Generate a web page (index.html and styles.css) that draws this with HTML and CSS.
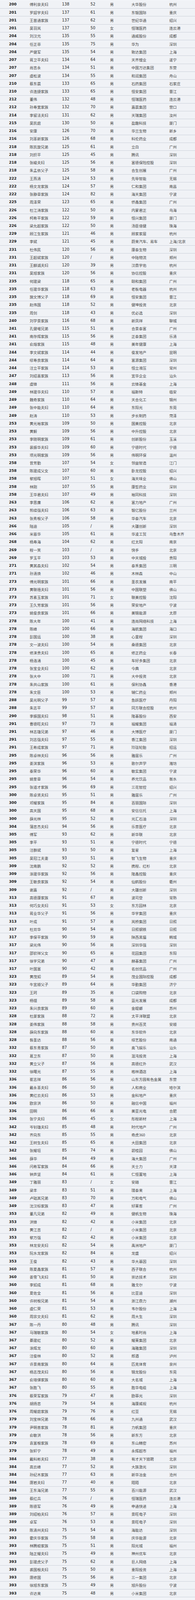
FILE: index.html
```html
<!DOCTYPE html>
<html lang="zh-CN">
<head>
<meta charset="utf-8">
<title>富豪榜 200-393</title>
<link rel="stylesheet" href="styles.css">
</head>
<body>
<div class="board">
<div class="row"><span class="rank">200</span><span class="name">傅利泉夫妇</span><span class="num">138</span><span class="age">52</span><span class="sex">男</span><span class="co">大华股份</span><span class="city">杭州</span></div>
<div class="row"><span class="rank">201</span><span class="name">罗韶宇夫妇</span><span class="num">137</span><span class="age">61</span><span class="sex">男</span><span class="co">东银国际</span><span class="city">重庆</span></div>
<div class="row"><span class="rank">201</span><span class="name">王苗通家族</span><span class="num">137</span><span class="age">62</span><span class="sex">男</span><span class="co">世纪华通</span><span class="city">绍兴</span></div>
<div class="row"><span class="rank">201</span><span class="name">吴羽岚</span><span class="num">137</span><span class="age">50</span><span class="sex">女</span><span class="co">恒瑞医药</span><span class="city">连云港</span></div>
<div class="row"><span class="rank">204</span><span class="name">刘汉元</span><span class="num">135</span><span class="age">55</span><span class="sex">男</span><span class="co">通威股份</span><span class="city">成都</span></div>
<div class="row"><span class="rank">204</span><span class="name">任正非</span><span class="num">135</span><span class="age">75</span><span class="sex">男</span><span class="co">华为</span><span class="city">深圳</span></div>
<div class="row"><span class="rank">204</span><span class="name">严健军</span><span class="num">135</span><span class="age">54</span><span class="sex">男</span><span class="co">致达集团</span><span class="city">上海</span></div>
<div class="row"><span class="rank">207</span><span class="name">蒋卫平夫妇</span><span class="num">134</span><span class="age">64</span><span class="sex">男</span><span class="co">天齐锂业</span><span class="city">遂宁</span></div>
<div class="row"><span class="rank">207</span><span class="name">尚吉永</span><span class="num">134</span><span class="age">51</span><span class="sex">男</span><span class="co">中国万达集团</span><span class="city">东营</span></div>
<div class="row"><span class="rank">207</span><span class="name">虞松波</span><span class="num">134</span><span class="age">55</span><span class="sex">男</span><span class="co">和润集团</span><span class="city">舟山</span></div>
<div class="row"><span class="rank">210</span><span class="name">蔡东晨</span><span class="num">133</span><span class="age">65</span><span class="sex">男</span><span class="co">石药集团</span><span class="city">石家庄</span></div>
<div class="row"><span class="rank">210</span><span class="name">许连捷家族</span><span class="num">133</span><span class="age">65</span><span class="sex">男</span><span class="co">恒安集团</span><span class="city">晋江</span></div>
<div class="row"><span class="rank">212</span><span class="name">董伟</span><span class="num">132</span><span class="age">48</span><span class="sex">男</span><span class="co">恒瑞医药</span><span class="city">连云港</span></div>
<div class="row"><span class="rank">212</span><span class="name">孙寿宽家族</span><span class="num">132</span><span class="age">70</span><span class="sex">男</span><span class="co">嘉晨集团</span><span class="city">营口</span></div>
<div class="row"><span class="rank">214</span><span class="name">李留法夫妇</span><span class="num">131</span><span class="age">62</span><span class="sex">男</span><span class="co">天瑞集团</span><span class="city">汝州</span></div>
<div class="row"><span class="rank">215</span><span class="name">吴凯庭</span><span class="num">130</span><span class="age">50</span><span class="sex">男</span><span class="co">盈趣科技</span><span class="city">厦门</span></div>
<div class="row"><span class="rank">216</span><span class="name">安康</span><span class="num">126</span><span class="age">70</span><span class="sex">男</span><span class="co">华兰生物</span><span class="city">新乡</span></div>
<div class="row"><span class="rank">216</span><span class="name">刘革新家族</span><span class="num">126</span><span class="age">68</span><span class="sex">男</span><span class="co">科伦药业</span><span class="city">成都</span></div>
<div class="row"><span class="rank">218</span><span class="name">陈凯旋兄弟</span><span class="num">125</span><span class="age">61</span><span class="sex">男</span><span class="co">立白</span><span class="city">广州</span></div>
<div class="row"><span class="rank">218</span><span class="name">刘炽平</span><span class="num">125</span><span class="age">45</span><span class="sex">男</span><span class="co">腾讯</span><span class="city">深圳</span></div>
<div class="row"><span class="rank">218</span><span class="name">张峻夫妇</span><span class="num">125</span><span class="age">56</span><span class="sex">男</span><span class="co">富德保险控股</span><span class="city">深圳</span></div>
<div class="row"><span class="rank">218</span><span class="name">朱孟依父子</span><span class="num">125</span><span class="age">58</span><span class="sex">男</span><span class="co">合生创展</span><span class="city">广州</span></div>
<div class="row"><span class="rank">222</span><span class="name">王燕清</span><span class="num">124</span><span class="age">53</span><span class="sex">男</span><span class="co">先导智能</span><span class="city">无锡</span></div>
<div class="row"><span class="rank">222</span><span class="name">杨文龙家族</span><span class="num">124</span><span class="age">57</span><span class="sex">男</span><span class="co">仁和集团</span><span class="city">南昌</span></div>
<div class="row"><span class="rank">222</span><span class="name">张静章家族</span><span class="num">124</span><span class="age">82</span><span class="sex">男</span><span class="co">海天集团</span><span class="city">宁波</span></div>
<div class="row"><span class="rank">225</span><span class="name">周泽荣</span><span class="num">123</span><span class="age">65</span><span class="sex">男</span><span class="co">侨鑫集团</span><span class="city">广州</span></div>
<div class="row"><span class="rank">226</span><span class="name">杜江涛家族</span><span class="num">122</span><span class="age">50</span><span class="sex">男</span><span class="co">内蒙君正</span><span class="city">乌海</span></div>
<div class="row"><span class="rank">226</span><span class="name">柯希平家族</span><span class="num">122</span><span class="age">59</span><span class="sex">男</span><span class="co">恒兴集团</span><span class="city">厦门</span></div>
<div class="row"><span class="rank">226</span><span class="name">梁允超家族</span><span class="num">122</span><span class="age">50</span><span class="sex">男</span><span class="co">汤臣倍健</span><span class="city">珠海</span></div>
<div class="row"><span class="rank">229</span><span class="name">顾江生家族</span><span class="num">121</span><span class="age">46</span><span class="sex">男</span><span class="co">顾家家居</span><span class="city">杭州</span></div>
<div class="row"><span class="rank">229</span><span class="name">李斌</span><span class="num">121</span><span class="age">45</span><span class="sex">男</span><span class="co">蔚来汽车、易车</span><span class="city">上海/北京</span></div>
<div class="row"><span class="rank">231</span><span class="name">杜伟民</span><span class="num">120</span><span class="age">56</span><span class="sex">男</span><span class="co">康泰生物</span><span class="city">深圳</span></div>
<div class="row"><span class="rank">231</span><span class="name">王超斌家族</span><span class="num">120</span><span class="age">/</span><span class="sex">男</span><span class="co">中陆物流</span><span class="city">郑州</span></div>
<div class="row"><span class="rank">231</span><span class="name">王麒诚夫妇</span><span class="num">120</span><span class="age">39</span><span class="sex">男</span><span class="co">汉鼎宇佑</span><span class="city">杭州</span></div>
<div class="row"><span class="rank">231</span><span class="name">吴旭家族</span><span class="num">120</span><span class="age">56</span><span class="sex">男</span><span class="co">协信控股</span><span class="city">重庆</span></div>
<div class="row"><span class="rank">235</span><span class="name">何建梁</span><span class="num">118</span><span class="age">65</span><span class="sex">男</span><span class="co">颐和集团</span><span class="city">广州</span></div>
<div class="row"><span class="rank">235</span><span class="name">任建华家族</span><span class="num">118</span><span class="age">63</span><span class="sex">男</span><span class="co">老板电器</span><span class="city">杭州</span></div>
<div class="row"><span class="rank">235</span><span class="name">施文博父子</span><span class="num">118</span><span class="age">69</span><span class="sex">男</span><span class="co">恒安集团</span><span class="city">晋江</span></div>
<div class="row"><span class="rank">235</span><span class="name">赵伟国</span><span class="num">118</span><span class="age">52</span><span class="sex">男</span><span class="co">健坤投资</span><span class="city">北京</span></div>
<div class="row"><span class="rank">235</span><span class="name">周剑</span><span class="num">118</span><span class="age">43</span><span class="sex">男</span><span class="co">优必选</span><span class="city">深圳</span></div>
<div class="row"><span class="rank">240</span><span class="name">刘学景家族</span><span class="num">116</span><span class="age">68</span><span class="sex">男</span><span class="co">新凤祥</span><span class="city">聊城</span></div>
<div class="row"><span class="rank">241</span><span class="name">孔健岷兄弟</span><span class="num">115</span><span class="age">51</span><span class="sex">男</span><span class="co">合景泰富</span><span class="city">广州</span></div>
<div class="row"><span class="rank">241</span><span class="name">南存辉家族</span><span class="num">115</span><span class="age">56</span><span class="sex">男</span><span class="co">正泰集团</span><span class="city">乐清</span></div>
<div class="row"><span class="rank">241</span><span class="name">俞熔家族</span><span class="num">115</span><span class="age">48</span><span class="sex">男</span><span class="co">美年健康</span><span class="city">上海</span></div>
<div class="row"><span class="rank">244</span><span class="name">李文斌家族</span><span class="num">114</span><span class="age">44</span><span class="sex">男</span><span class="co">俊发地产</span><span class="city">昆明</span></div>
<div class="row"><span class="rank">244</span><span class="name">缪寿良家族</span><span class="num">114</span><span class="age">64</span><span class="sex">男</span><span class="co">富源集团</span><span class="city">深圳</span></div>
<div class="row"><span class="rank">244</span><span class="name">汪立平家族</span><span class="num">114</span><span class="age">53</span><span class="sex">男</span><span class="co">恒立液压</span><span class="city">常州</span></div>
<div class="row"><span class="rank">247</span><span class="name">刘绍喜家族</span><span class="num">113</span><span class="age">56</span><span class="sex">男</span><span class="co">宜华企业</span><span class="city">汕头</span></div>
<div class="row"><span class="rank">248</span><span class="name">虞锋</span><span class="num">111</span><span class="age">56</span><span class="sex">男</span><span class="co">云锋基金</span><span class="city">上海</span></div>
<div class="row"><span class="rank">249</span><span class="name">林建华夫妇</span><span class="num">110</span><span class="age">57</span><span class="sex">男</span><span class="co">福斯特</span><span class="city">临安</span></div>
<div class="row"><span class="rank">249</span><span class="name">魏奇家族</span><span class="num">110</span><span class="age">64</span><span class="sex">男</span><span class="co">天合化工</span><span class="city">锦州</span></div>
<div class="row"><span class="rank">249</span><span class="name">张中能夫妇</span><span class="num">110</span><span class="age">64</span><span class="sex">男</span><span class="co">东阳光</span><span class="city">东莞</span></div>
<div class="row"><span class="rank">249</span><span class="name">赵涛</span><span class="num">110</span><span class="age">53</span><span class="sex">男</span><span class="co">步长制药</span><span class="city">菏泽</span></div>
<div class="row"><span class="rank">253</span><span class="name">黄光裕家族</span><span class="num">109</span><span class="age">50</span><span class="sex">男</span><span class="co">国美控股</span><span class="city">北京</span></div>
<div class="row"><span class="rank">253</span><span class="name">黄毅</span><span class="num">109</span><span class="age">56</span><span class="sex">男</span><span class="co">中升控股</span><span class="city">北京</span></div>
<div class="row"><span class="rank">253</span><span class="name">李晓明家族</span><span class="num">109</span><span class="age">61</span><span class="sex">男</span><span class="co">创新股份</span><span class="city">玉溪</span></div>
<div class="row"><span class="rank">253</span><span class="name">裴振华夫妇</span><span class="num">109</span><span class="age">60</span><span class="sex">男</span><span class="co">宁德时代</span><span class="city">宁德</span></div>
<div class="row"><span class="rank">253</span><span class="name">项光明家族</span><span class="num">109</span><span class="age">56</span><span class="sex">男</span><span class="co">伟明环保</span><span class="city">温州</span></div>
<div class="row"><span class="rank">258</span><span class="name">曾芳勤</span><span class="num">107</span><span class="age">54</span><span class="sex">女</span><span class="co">领益智造</span><span class="city">江门</span></div>
<div class="row"><span class="rank">258</span><span class="name">陈建成父女</span><span class="num">107</span><span class="age">60</span><span class="sex">男</span><span class="co">卧龙控股</span><span class="city">绍兴</span></div>
<div class="row"><span class="rank">258</span><span class="name">黎旭晖</span><span class="num">107</span><span class="age">51</span><span class="sex">女</span><span class="co">海天味业</span><span class="city">佛山</span></div>
<div class="row"><span class="rank">258</span><span class="name">林刚</span><span class="num">107</span><span class="age">55</span><span class="sex">男</span><span class="co">康哲药业</span><span class="city">深圳</span></div>
<div class="row"><span class="rank">258</span><span class="name">王华君夫妇</span><span class="num">107</span><span class="age">49</span><span class="sex">男</span><span class="co">裕同科技</span><span class="city">深圳</span></div>
<div class="row"><span class="rank">263</span><span class="name">李思廉</span><span class="num">106</span><span class="age">62</span><span class="sex">男</span><span class="co">富力地产</span><span class="city">广州</span></div>
<div class="row"><span class="rank">263</span><span class="name">熊续强夫妇</span><span class="num">106</span><span class="age">63</span><span class="sex">男</span><span class="co">银亿股份</span><span class="city">兰州</span></div>
<div class="row"><span class="rank">263</span><span class="name">张秀根父子</span><span class="num">106</span><span class="age">58</span><span class="sex">男</span><span class="co">华泰汽车</span><span class="city">北京</span></div>
<div class="row"><span class="rank">266</span><span class="name">陆迪</span><span class="num">105</span><span class="age">/</span><span class="sex">男</span><span class="co">大疆创新</span><span class="city">深圳</span></div>
<div class="row"><span class="rank">266</span><span class="name">米恩华</span><span class="num">105</span><span class="age">61</span><span class="sex">男</span><span class="co">华凌工贸</span><span class="city">乌鲁木齐</span></div>
<div class="row"><span class="rank">268</span><span class="name">杨寿海</span><span class="num">104</span><span class="age">62</span><span class="sex">男</span><span class="co">红太阳</span><span class="city">南京</span></div>
<div class="row"><span class="rank">269</span><span class="name">程一笑</span><span class="num">103</span><span class="age">/</span><span class="sex">男</span><span class="co">快手</span><span class="city">北京</span></div>
<div class="row"><span class="rank">269</span><span class="name">罗玉平</span><span class="num">103</span><span class="age">53</span><span class="sex">男</span><span class="co">中天城投</span><span class="city">贵阳</span></div>
<div class="row"><span class="rank">271</span><span class="name">黄其森夫妇</span><span class="num">102</span><span class="age">54</span><span class="sex">男</span><span class="co">泰禾集团</span><span class="city">三明</span></div>
<div class="row"><span class="rank">271</span><span class="name">孙清焕</span><span class="num">102</span><span class="age">46</span><span class="sex">男</span><span class="co">木林森</span><span class="city">中山</span></div>
<div class="row"><span class="rank">273</span><span class="name">傅光明家族</span><span class="num">101</span><span class="age">66</span><span class="sex">男</span><span class="co">圣农发展</span><span class="city">南平</span></div>
<div class="row"><span class="rank">273</span><span class="name">黄联禧夫妇</span><span class="num">101</span><span class="age">56</span><span class="sex">男</span><span class="co">中国联塑</span><span class="city">佛山</span></div>
<div class="row"><span class="rank">273</span><span class="name">苏素玉家族</span><span class="num">101</span><span class="age">71</span><span class="sex">女</span><span class="co">联美控股</span><span class="city">沈阳</span></div>
<div class="row"><span class="rank">273</span><span class="name">王久芳家族</span><span class="num">101</span><span class="age">56</span><span class="sex">男</span><span class="co">荣安地产</span><span class="city">宁波</span></div>
<div class="row"><span class="rank">273</span><span class="name">姚俊良家族</span><span class="num">101</span><span class="age">66</span><span class="sex">男</span><span class="co">美锦能源</span><span class="city">太原</span></div>
<div class="row"><span class="rank">278</span><span class="name">陈大年</span><span class="num">100</span><span class="age">41</span><span class="sex">男</span><span class="co">连尚网络科技</span><span class="city">上海</span></div>
<div class="row"><span class="rank">278</span><span class="name">陈峰</span><span class="num">100</span><span class="age">66</span><span class="sex">男</span><span class="co">海航集团</span><span class="city">海口</span></div>
<div class="row"><span class="rank">278</span><span class="name">彭国远</span><span class="num">100</span><span class="age">38</span><span class="sex">男</span><span class="co">心里程</span><span class="city">深圳</span></div>
<div class="row"><span class="rank">278</span><span class="name">文一波夫妇</span><span class="num">100</span><span class="age">54</span><span class="sex">男</span><span class="co">桑德集团</span><span class="city">北京</span></div>
<div class="row"><span class="rank">278</span><span class="name">修涞贵夫妇</span><span class="num">100</span><span class="age">65</span><span class="sex">男</span><span class="co">修正药业</span><span class="city">长春</span></div>
<div class="row"><span class="rank">278</span><span class="name">杨浩涌</span><span class="num">100</span><span class="age">45</span><span class="sex">男</span><span class="co">车好多集团</span><span class="city">北京</span></div>
<div class="row"><span class="rank">278</span><span class="name">张宝全夫妇</span><span class="num">100</span><span class="age">62</span><span class="sex">男</span><span class="co">今典</span><span class="city">北京</span></div>
<div class="row"><span class="rank">278</span><span class="name">张大中</span><span class="num">100</span><span class="age">71</span><span class="sex">男</span><span class="co">大中投资</span><span class="city">北京</span></div>
<div class="row"><span class="rank">278</span><span class="name">朱共山家族</span><span class="num">100</span><span class="age">61</span><span class="sex">男</span><span class="co">保利协鑫</span><span class="city">香港</span></div>
<div class="row"><span class="rank">278</span><span class="name">朱文臣</span><span class="num">100</span><span class="age">53</span><span class="sex">男</span><span class="co">辅仁药业</span><span class="city">郑州</span></div>
<div class="row"><span class="rank">288</span><span class="name">吴光明父子</span><span class="num">99</span><span class="age">57</span><span class="sex">男</span><span class="co">鱼跃医疗</span><span class="city">丹阳</span></div>
<div class="row"><span class="rank">288</span><span class="name">朱志平</span><span class="num">99</span><span class="age">57</span><span class="sex">男</span><span class="co">同方联合控股</span><span class="city">杭州</span></div>
<div class="row"><span class="rank">290</span><span class="name">李振国夫妇</span><span class="num">98</span><span class="age">51</span><span class="sex">男</span><span class="co">隆基股份</span><span class="city">西安</span></div>
<div class="row"><span class="rank">291</span><span class="name">曹德旺夫妇</span><span class="num">97</span><span class="age">73</span><span class="sex">男</span><span class="co">福耀集团</span><span class="city">福清</span></div>
<div class="row"><span class="rank">291</span><span class="name">林志雄兄弟</span><span class="num">97</span><span class="age">46</span><span class="sex">男</span><span class="co">大博医疗</span><span class="city">厦门</span></div>
<div class="row"><span class="rank">291</span><span class="name">刘志强夫妇</span><span class="num">97</span><span class="age">55</span><span class="sex">男</span><span class="co">香江集团</span><span class="city">深圳</span></div>
<div class="row"><span class="rank">291</span><span class="name">王希成家族</span><span class="num">97</span><span class="age">71</span><span class="sex">男</span><span class="co">玲珑轮胎</span><span class="city">招远</span></div>
<div class="row"><span class="rank">295</span><span class="name">陈卓林夫妇</span><span class="num">96</span><span class="age">56</span><span class="sex">男</span><span class="co">雅居乐</span><span class="city">广州</span></div>
<div class="row"><span class="rank">295</span><span class="name">姜滨家族</span><span class="num">96</span><span class="age">53</span><span class="sex">男</span><span class="co">歌尔声学</span><span class="city">潍坊</span></div>
<div class="row"><span class="rank">295</span><span class="name">秦荣华</span><span class="num">96</span><span class="age">60</span><span class="sex">男</span><span class="co">敏实集团</span><span class="city">宁波</span></div>
<div class="row"><span class="rank">295</span><span class="name">姚奎章</span><span class="num">96</span><span class="age">54</span><span class="sex">男</span><span class="co">养元饮品</span><span class="city">衡水</span></div>
<div class="row"><span class="rank">295</span><span class="name">张道才家族</span><span class="num">96</span><span class="age">69</span><span class="sex">男</span><span class="co">三花智控</span><span class="city">绍兴</span></div>
<div class="row"><span class="rank">300</span><span class="name">陈卓贤夫妇</span><span class="num">95</span><span class="age">51</span><span class="sex">男</span><span class="co">雅居乐</span><span class="city">广州</span></div>
<div class="row"><span class="rank">300</span><span class="name">邓耀家族</span><span class="num">95</span><span class="age">84</span><span class="sex">男</span><span class="co">百丽国际</span><span class="city">深圳</span></div>
<div class="row"><span class="rank">300</span><span class="name">高天国</span><span class="num">95</span><span class="age">68</span><span class="sex">男</span><span class="co">安信信托</span><span class="city">上海</span></div>
<div class="row"><span class="rank">300</span><span class="name">薛光林</span><span class="num">95</span><span class="age">52</span><span class="sex">男</span><span class="co">光汇石油</span><span class="city">深圳</span></div>
<div class="row"><span class="rank">304</span><span class="name">蒲忠杰夫妇</span><span class="num">94</span><span class="age">56</span><span class="sex">男</span><span class="co">乐普医疗</span><span class="city">北京</span></div>
<div class="row"><span class="rank">305</span><span class="name">傅军</span><span class="num">93</span><span class="age">62</span><span class="sex">男</span><span class="co">新华联</span><span class="city">北京</span></div>
<div class="row"><span class="rank">305</span><span class="name">李平</span><span class="num">93</span><span class="age">51</span><span class="sex">男</span><span class="co">宁德时代</span><span class="city">宁德</span></div>
<div class="row"><span class="rank">305</span><span class="name">汪群斌</span><span class="num">93</span><span class="age">50</span><span class="sex">男</span><span class="co">复星</span><span class="city">上海</span></div>
<div class="row"><span class="rank">305</span><span class="name">吴冠江夫妻</span><span class="num">93</span><span class="age">51</span><span class="sex">男</span><span class="co">智飞生物</span><span class="city">重庆</span></div>
<div class="row"><span class="rank">309</span><span class="name">沈南鹏</span><span class="num">92</span><span class="age">52</span><span class="sex">男</span><span class="co">携程、红杉</span><span class="city">北京</span></div>
<div class="row"><span class="rank">309</span><span class="name">涂建华家族</span><span class="num">92</span><span class="age">56</span><span class="sex">男</span><span class="co">隆鑫控股</span><span class="city">重庆</span></div>
<div class="row"><span class="rank">309</span><span class="name">王敏良家族</span><span class="num">92</span><span class="age">54</span><span class="sex">男</span><span class="co">仙鹤股份</span><span class="city">衢州</span></div>
<div class="row"><span class="rank">309</span><span class="name">谢嘉</span><span class="num">92</span><span class="age">/</span><span class="sex">男</span><span class="co">大疆创新</span><span class="city">深圳</span></div>
<div class="row"><span class="rank">313</span><span class="name">高德康家族</span><span class="num">91</span><span class="age">67</span><span class="sex">男</span><span class="co">波司登</span><span class="city">常熟</span></div>
<div class="row"><span class="rank">313</span><span class="name">何巧女夫妇</span><span class="num">91</span><span class="age">53</span><span class="sex">女</span><span class="co">东方园林</span><span class="city">北京</span></div>
<div class="row"><span class="rank">313</span><span class="name">蒋业华父子</span><span class="num">91</span><span class="age">56</span><span class="sex">男</span><span class="co">华宇集团</span><span class="city">重庆</span></div>
<div class="row"><span class="rank">313</span><span class="name">叶成</span><span class="num">91</span><span class="age">57</span><span class="sex">男</span><span class="co">岚桥集团</span><span class="city">日照</span></div>
<div class="row"><span class="rank">317</span><span class="name">杜双华</span><span class="num">90</span><span class="age">54</span><span class="sex">男</span><span class="co">日照钢铁</span><span class="city">日照</span></div>
<div class="row"><span class="rank">317</span><span class="name">李保平家族</span><span class="num">90</span><span class="age">59</span><span class="sex">男</span><span class="co">陕西黑猫</span><span class="city">韩城</span></div>
<div class="row"><span class="rank">317</span><span class="name">梁光伟</span><span class="num">90</span><span class="age">56</span><span class="sex">男</span><span class="co">深圳华强</span><span class="city">深圳</span></div>
<div class="row"><span class="rank">317</span><span class="name">邵钦祥父女</span><span class="num">90</span><span class="age">65</span><span class="sex">男</span><span class="co">花园集团</span><span class="city">东阳</span></div>
<div class="row"><span class="rank">317</span><span class="name">徐宇兄弟</span><span class="num">90</span><span class="age">47</span><span class="sex">男</span><span class="co">赫基集团</span><span class="city">广州</span></div>
<div class="row"><span class="rank">317</span><span class="name">叶国富</span><span class="num">90</span><span class="age">42</span><span class="sex">男</span><span class="co">名创优品</span><span class="city">广州</span></div>
<div class="row"><span class="rank">323</span><span class="name">黄茂如</span><span class="num">89</span><span class="age">54</span><span class="sex">男</span><span class="co">茂业国际控股</span><span class="city">成都</span></div>
<div class="row"><span class="rank">323</span><span class="name">牛宜顺父子</span><span class="num">89</span><span class="age">64</span><span class="sex">男</span><span class="co">华勤集团</span><span class="city">济宁</span></div>
<div class="row"><span class="rank">323</span><span class="name">王珂</span><span class="num">89</span><span class="age">35</span><span class="sex">男</span><span class="co">口袋购物</span><span class="city">北京</span></div>
<div class="row"><span class="rank">323</span><span class="name">杨铿</span><span class="num">89</span><span class="age">58</span><span class="sex">男</span><span class="co">蓝光发展</span><span class="city">成都</span></div>
<div class="row"><span class="rank">323</span><span class="name">朱兴良家族</span><span class="num">89</span><span class="age">60</span><span class="sex">男</span><span class="co">金螳螂</span><span class="city">苏州</span></div>
<div class="row"><span class="rank">328</span><span class="name">杜厦家族</span><span class="num">88</span><span class="age">72</span><span class="sex">男</span><span class="co">太平洋联盟</span><span class="city">北京</span></div>
<div class="row"><span class="rank">328</span><span class="name">姜伟家族</span><span class="num">88</span><span class="age">58</span><span class="sex">男</span><span class="co">贵州百灵</span><span class="city">安顺</span></div>
<div class="row"><span class="rank">328</span><span class="name">薛向东家族</span><span class="num">88</span><span class="age">60</span><span class="sex">男</span><span class="co">东华软件</span><span class="city">北京</span></div>
<div class="row"><span class="rank">328</span><span class="name">昝圣达</span><span class="num">88</span><span class="age">56</span><span class="sex">男</span><span class="co">综艺股份</span><span class="city">南通</span></div>
<div class="row"><span class="rank">332</span><span class="name">蔡东青家族</span><span class="num">87</span><span class="age">50</span><span class="sex">男</span><span class="co">奥飞娱乐</span><span class="city">汕头</span></div>
<div class="row"><span class="rank">332</span><span class="name">葛卫东</span><span class="num">87</span><span class="age">50</span><span class="sex">男</span><span class="co">混沌投资</span><span class="city">上海</span></div>
<div class="row"><span class="rank">332</span><span class="name">黄立父子</span><span class="num">87</span><span class="age">56</span><span class="sex">男</span><span class="co">高德红外</span><span class="city">武汉</span></div>
<div class="row"><span class="rank">332</span><span class="name">徐曙光</span><span class="num">87</span><span class="age">55</span><span class="sex">男</span><span class="co">格林酒店</span><span class="city">上海</span></div>
<div class="row"><span class="rank">336</span><span class="name">崔志祥</span><span class="num">86</span><span class="age">56</span><span class="sex">男</span><span class="co">山东方圆有色金属</span><span class="city">东营</span></div>
<div class="row"><span class="rank">336</span><span class="name">戴永革夫妇</span><span class="num">86</span><span class="age">50</span><span class="sex">男</span><span class="co">人和商业</span><span class="city">哈尔滨</span></div>
<div class="row"><span class="rank">336</span><span class="name">黄红云夫妇</span><span class="num">86</span><span class="age">53</span><span class="sex">男</span><span class="co">金科地产</span><span class="city">重庆</span></div>
<div class="row"><span class="rank">336</span><span class="name">欧宗洪</span><span class="num">86</span><span class="age">50</span><span class="sex">男</span><span class="co">融信中国</span><span class="city">福州</span></div>
<div class="row"><span class="rank">336</span><span class="name">田明</span><span class="num">86</span><span class="age">66</span><span class="sex">男</span><span class="co">美亚光电</span><span class="city">合肥</span></div>
<div class="row"><span class="rank">336</span><span class="name">张宁夫妇</span><span class="num">86</span><span class="age">45</span><span class="sex">女</span><span class="co">彤程新材</span><span class="city">上海</span></div>
<div class="row"><span class="rank">342</span><span class="name">岑钊雄夫妇</span><span class="num">85</span><span class="age">48</span><span class="sex">男</span><span class="co">时代地产</span><span class="city">广州</span></div>
<div class="row"><span class="rank">342</span><span class="name">齐向东</span><span class="num">85</span><span class="age">55</span><span class="sex">男</span><span class="co">奇虎360</span><span class="city">北京</span></div>
<div class="row"><span class="rank">342</span><span class="name">王树生夫妇</span><span class="num">85</span><span class="age">65</span><span class="sex">男</span><span class="co">大田集团</span><span class="city">北京</span></div>
<div class="row"><span class="rank">342</span><span class="name">张耀垣</span><span class="num">85</span><span class="age">74</span><span class="sex">男</span><span class="co">碧桂园</span><span class="city">佛山</span></div>
<div class="row"><span class="rank">346</span><span class="name">薛华</span><span class="num">84</span><span class="age">49</span><span class="sex">男</span><span class="co">海大集团</span><span class="city">广州</span></div>
<div class="row"><span class="rank">346</span><span class="name">闫希军家族</span><span class="num">84</span><span class="age">66</span><span class="sex">男</span><span class="co">天士力</span><span class="city">天津</span></div>
<div class="row"><span class="rank">346</span><span class="name">钟声坚</span><span class="num">84</span><span class="age">61</span><span class="sex">男</span><span class="co">仁恒置地</span><span class="city">上海</span></div>
<div class="row"><span class="rank">349</span><span class="name">丁雅丽</span><span class="num">83</span><span class="age">/</span><span class="sex">女</span><span class="co">安踏</span><span class="city">晋江</span></div>
<div class="row"><span class="rank">349</span><span class="name">梁丰</span><span class="num">83</span><span class="age">51</span><span class="sex">男</span><span class="co">璞泰来</span><span class="city">上海</span></div>
<div class="row"><span class="rank">349</span><span class="name">卢础其兄弟</span><span class="num">83</span><span class="age">70</span><span class="sex">男</span><span class="co">万和电气</span><span class="city">佛山</span></div>
<div class="row"><span class="rank">349</span><span class="name">沈汉标家族</span><span class="num">83</span><span class="age">47</span><span class="sex">男</span><span class="co">好莱客</span><span class="city">广州</span></div>
<div class="row"><span class="rank">353</span><span class="name">董凡兄弟</span><span class="num">82</span><span class="age">49</span><span class="sex">男</span><span class="co">健帆生物</span><span class="city">珠海</span></div>
<div class="row"><span class="rank">353</span><span class="name">洪锋</span><span class="num">82</span><span class="age">42</span><span class="sex">男</span><span class="co">小米集团</span><span class="city">北京</span></div>
<div class="row"><span class="rank">353</span><span class="name">黄江吉</span><span class="num">82</span><span class="age">/</span><span class="sex">男</span><span class="co">小米集团</span><span class="city">北京</span></div>
<div class="row"><span class="rank">353</span><span class="name">黎万强</span><span class="num">82</span><span class="age">42</span><span class="sex">男</span><span class="co">小米集团</span><span class="city">北京</span></div>
<div class="row"><span class="rank">353</span><span class="name">林龙安夫妇</span><span class="num">82</span><span class="age">54</span><span class="sex">男</span><span class="co">禹洲地产</span><span class="city">厦门</span></div>
<div class="row"><span class="rank">353</span><span class="name">阮水龙家族</span><span class="num">82</span><span class="age">84</span><span class="sex">男</span><span class="co">龙盛</span><span class="city">绍兴</span></div>
<div class="row"><span class="rank">353</span><span class="name">王俊</span><span class="num">82</span><span class="age">43</span><span class="sex">男</span><span class="co">华大基因</span><span class="city">深圳</span></div>
<div class="row"><span class="rank">360</span><span class="name">陈夏鑫家族</span><span class="num">81</span><span class="age">57</span><span class="sex">男</span><span class="co">西子联合</span><span class="city">杭州</span></div>
<div class="row"><span class="rank">360</span><span class="name">姜雪飞夫妇</span><span class="num">81</span><span class="age">50</span><span class="sex">男</span><span class="co">崇达技术</span><span class="city">深圳</span></div>
<div class="row"><span class="rank">360</span><span class="name">李如成</span><span class="num">81</span><span class="age">68</span><span class="sex">男</span><span class="co">雅戈尔</span><span class="city">宁波</span></div>
<div class="row"><span class="rank">360</span><span class="name">夏佐全</span><span class="num">81</span><span class="age">56</span><span class="sex">男</span><span class="co">比亚迪</span><span class="city">深圳</span></div>
<div class="row"><span class="rank">360</span><span class="name">许树根兄弟</span><span class="num">81</span><span class="age">54</span><span class="sex">男</span><span class="co">浙江鼎力</span><span class="city">湖州</span></div>
<div class="row"><span class="rank">360</span><span class="name">虞仁荣</span><span class="num">81</span><span class="age">53</span><span class="sex">男</span><span class="co">韦尔股份</span><span class="city">上海</span></div>
<div class="row"><span class="rank">360</span><span class="name">周宗文夫妇</span><span class="num">81</span><span class="age">62</span><span class="sex">男</span><span class="co">周大生</span><span class="city">深圳</span></div>
<div class="row"><span class="rank">367</span><span class="name">陈一丹</span><span class="num">80</span><span class="age">48</span><span class="sex">男</span><span class="co">腾讯</span><span class="city">深圳</span></div>
<div class="row"><span class="rank">367</span><span class="name">马瑞敏家族</span><span class="num">80</span><span class="age">54</span><span class="sex">女</span><span class="co">地素时尚</span><span class="city">上海</span></div>
<div class="row"><span class="rank">367</span><span class="name">綦建虹</span><span class="num">80</span><span class="age">52</span><span class="sex">男</span><span class="co">耀莱集团</span><span class="city">北京</span></div>
<div class="row"><span class="rank">367</span><span class="name">涂辉龙</span><span class="num">80</span><span class="age">60</span><span class="sex">男</span><span class="co">海雅集团</span><span class="city">深圳</span></div>
<div class="row"><span class="rank">367</span><span class="name">汪俊林</span><span class="num">80</span><span class="age">52</span><span class="sex">男</span><span class="co">郎酒</span><span class="city">泸州</span></div>
<div class="row"><span class="rank">367</span><span class="name">许景南家族</span><span class="num">80</span><span class="age">64</span><span class="sex">男</span><span class="co">匹克体育</span><span class="city">泉州</span></div>
<div class="row"><span class="rank">367</span><span class="name">杨志茂夫妇</span><span class="num">80</span><span class="age">56</span><span class="sex">男</span><span class="co">锦龙股份</span><span class="city">东莞</span></div>
<div class="row"><span class="rank">367</span><span class="name">俞培俤家族</span><span class="num">80</span><span class="age">60</span><span class="sex">男</span><span class="co">大名城</span><span class="city">上海</span></div>
<div class="row"><span class="rank">367</span><span class="name">张胜飞</span><span class="num">80</span><span class="age">55</span><span class="sex">男</span><span class="co">胜华电缆</span><span class="city">上海</span></div>
<div class="row"><span class="rank">376</span><span class="name">蔡荣军家族</span><span class="num">79</span><span class="age">47</span><span class="sex">男</span><span class="co">欧菲光</span><span class="city">深圳</span></div>
<div class="row"><span class="rank">376</span><span class="name">胡扬忠</span><span class="num">79</span><span class="age">54</span><span class="sex">男</span><span class="co">海康威视</span><span class="city">杭州</span></div>
<div class="row"><span class="rank">376</span><span class="name">周耀庭家族</span><span class="num">79</span><span class="age">76</span><span class="sex">男</span><span class="co">红豆</span><span class="city">无锡</span></div>
<div class="row"><span class="rank">379</span><span class="name">刘宝林兄弟</span><span class="num">78</span><span class="age">66</span><span class="sex">男</span><span class="co">九州通</span><span class="city">武汉</span></div>
<div class="row"><span class="rank">379</span><span class="name">尹明善家族</span><span class="num">78</span><span class="age">81</span><span class="sex">男</span><span class="co">力帆集团</span><span class="city">重庆</span></div>
<div class="row"><span class="rank">379</span><span class="name">俞敏洪</span><span class="num">78</span><span class="age">56</span><span class="sex">男</span><span class="co">新东方</span><span class="city">北京</span></div>
<div class="row"><span class="rank">379</span><span class="name">袁富根家族</span><span class="num">78</span><span class="age">69</span><span class="sex">男</span><span class="co">东山精密</span><span class="city">苏州</span></div>
<div class="row"><span class="rank">379</span><span class="name">张轩宁</span><span class="num">78</span><span class="age">49</span><span class="sex">男</span><span class="co">永辉超市</span><span class="city">福州</span></div>
<div class="row"><span class="rank">384</span><span class="name">戴科彬夫妇</span><span class="num">77</span><span class="age">38</span><span class="sex">男</span><span class="co">有才天下猎聘</span><span class="city">北京</span></div>
<div class="row"><span class="rank">384</span><span class="name">高云峰</span><span class="num">77</span><span class="age">52</span><span class="sex">男</span><span class="co">大族激光</span><span class="city">深圳</span></div>
<div class="row"><span class="rank">384</span><span class="name">孙纪木家族</span><span class="num">77</span><span class="age">63</span><span class="sex">男</span><span class="co">新华冶金</span><span class="city">沧州</span></div>
<div class="row"><span class="rank">384</span><span class="name">唐岩夫妇</span><span class="num">77</span><span class="age">40</span><span class="sex">男</span><span class="co">陌陌</span><span class="city">北京</span></div>
<div class="row"><span class="rank">384</span><span class="name">王东海兄弟</span><span class="num">77</span><span class="age">55</span><span class="sex">男</span><span class="co">百川能源</span><span class="city">武汉</span></div>
<div class="row"><span class="rank">389</span><span class="name">蔡红兵</span><span class="num">76</span><span class="age">/</span><span class="sex">男</span><span class="co">恒瑞医药</span><span class="city">连云港</span></div>
<div class="row"><span class="rank">389</span><span class="name">陈德军</span><span class="num">76</span><span class="age">49</span><span class="sex">男</span><span class="co">申通快递</span><span class="city">上海</span></div>
<div class="row"><span class="rank">389</span><span class="name">刘绍柏夫妇</span><span class="num">76</span><span class="age">57</span><span class="sex">男</span><span class="co">景旺电子</span><span class="city">深圳</span></div>
<div class="row"><span class="rank">389</span><span class="name">卓军</span><span class="num">76</span><span class="age">53</span><span class="sex">男</span><span class="co">景旺电子</span><span class="city">深圳</span></div>
<div class="row"><span class="rank">393</span><span class="name">陈清州夫妇</span><span class="num">75</span><span class="age">54</span><span class="sex">男</span><span class="co">海能达</span><span class="city">深圳</span></div>
<div class="row"><span class="rank">393</span><span class="name">霍庆华家族</span><span class="num">75</span><span class="age">58</span><span class="sex">男</span><span class="co">庆华能源</span><span class="city">北京</span></div>
<div class="row"><span class="rank">393</span><span class="name">林腾蛟家族</span><span class="num">75</span><span class="age">51</span><span class="sex">男</span><span class="co">阳光城</span><span class="city">福州</span></div>
<div class="row"><span class="rank">393</span><span class="name">陆正耀夫妇</span><span class="num">75</span><span class="age">49</span><span class="sex">男</span><span class="co">神州优车</span><span class="city">北京</span></div>
<div class="row"><span class="rank">393</span><span class="name">彭建虎父子</span><span class="num">75</span><span class="age">62</span><span class="sex">男</span><span class="co">巨人网络</span><span class="city">上海</span></div>
<div class="row"><span class="rank">393</span><span class="name">裘国根夫妇</span><span class="num">75</span><span class="age">50</span><span class="sex">男</span><span class="co">重阳投资</span><span class="city">上海</span></div>
<div class="row"><span class="rank">393</span><span class="name">唐修国</span><span class="num">75</span><span class="age">56</span><span class="sex">男</span><span class="co">三一集团</span><span class="city">北京</span></div>
<div class="row"><span class="rank">393</span><span class="name">徐旭东家族</span><span class="num">75</span><span class="age">49</span><span class="sex">男</span><span class="co">旭升股份</span><span class="city">宁波</span></div>
<div class="row"><span class="rank">393</span><span class="name">许达来</span><span class="num">75</span><span class="age">48</span><span class="sex">男</span><span class="co">小米集团</span><span class="city">北京</span></div>
</div>
</body>
</html>
```

FILE: styles.css
```css
html, body {
  margin: 0;
  padding: 0;
  background: #f2f4f8;
}

.board {
  width: 500px;
  padding-top: 1.8px;
}

.row {
  box-sizing: border-box;
  display: grid;
  grid-template-columns: 53px 83px 73px 50px 55px 97px 1fr;
  align-items: center;
  height: 20.24px;
  overflow: hidden;
  padding-left: 23px;
  border-bottom: 1px solid #cbd0d9;
  background: #f0f2f6;
  line-height: 12px;
  white-space: nowrap;
}

.row > span {
  display: block;
}

.rank {
  font-family: "DejaVu Sans", sans-serif;
  font-weight: 700;
  font-size: 9.4px;
  color: #1c1c1c;
}

.num,
.age {
  font-family: "DejaVu Sans", sans-serif;
  font-size: 9.8px;
  color: #292929;
}

.name,
.sex,
.co,
.city {
  font-family: "Noto Sans CJK SC", sans-serif;
  font-size: 9.6px;
  color: #4b4b4b;
}
```
